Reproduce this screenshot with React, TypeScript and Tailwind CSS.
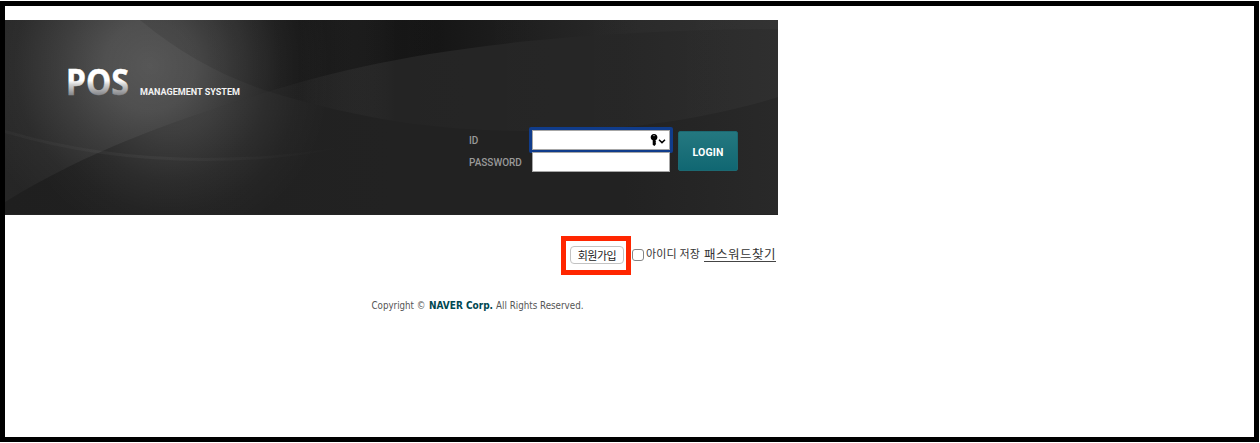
import React from "react";

function BannerArt() {
  return (
    <svg className="absolute inset-0 h-full w-full" viewBox="5 20 773 195" preserveAspectRatio="none" aria-hidden="true">
      <defs>
        <linearGradient id="base" x1="0" y1="0" x2="1" y2="0">
          <stop offset="0" stopColor="#262626" />
          <stop offset="0.3" stopColor="#1f1f1f" />
          <stop offset="0.42" stopColor="#171717" />
          <stop offset="0.56" stopColor="#131313" />
          <stop offset="0.68" stopColor="#1c1c1c" />
          <stop offset="0.82" stopColor="#262626" />
          <stop offset="1" stopColor="#2d2d2d" />
        </linearGradient>
        <linearGradient id="lower" x1="0" y1="0" x2="1" y2="0">
          <stop offset="0" stopColor="#1f1f1f" />
          <stop offset="0.5" stopColor="#222222" />
          <stop offset="0.8" stopColor="#222222" />
          <stop offset="1" stopColor="#292929" />
        </linearGradient>
        <radialGradient id="glow" gradientUnits="userSpaceOnUse" cx="150" cy="66" r="180">
          <stop offset="0" stopColor="#fff" stopOpacity="0.24" />
          <stop offset="0.25" stopColor="#fff" stopOpacity="0.205" />
          <stop offset="0.5" stopColor="#fff" stopOpacity="0.115" />
          <stop offset="0.75" stopColor="#fff" stopOpacity="0.035" />
          <stop offset="1" stopColor="#fff" stopOpacity="0" />
        </radialGradient>
        <radialGradient id="glowLow" gradientUnits="userSpaceOnUse" cx="170" cy="85" r="160">
          <stop offset="0" stopColor="#fff" stopOpacity="0.19" />
          <stop offset="0.3" stopColor="#fff" stopOpacity="0.135" />
          <stop offset="0.6" stopColor="#fff" stopOpacity="0.055" />
          <stop offset="0.8" stopColor="#fff" stopOpacity="0.018" />
          <stop offset="1" stopColor="#fff" stopOpacity="0" />
        </radialGradient>
        <linearGradient id="lens" x1="0" y1="0" x2="1" y2="0">
          <stop offset="0" stopColor="#000" stopOpacity="0.1" />
          <stop offset="0.25" stopColor="#000" stopOpacity="0.1" />
          <stop offset="0.4" stopColor="#fff" stopOpacity="0.01" />
          <stop offset="1" stopColor="#fff" stopOpacity="0.03" />
        </linearGradient>
        <linearGradient id="shine" gradientUnits="userSpaceOnUse" x1="5" y1="0" x2="350" y2="0">
          <stop offset="0" stopColor="#fff" stopOpacity="0.025" />
          <stop offset="0.45" stopColor="#fff" stopOpacity="0.04" />
          <stop offset="1" stopColor="#fff" stopOpacity="0" />
        </linearGradient>
      </defs>
      <rect x="5" y="20" width="773" height="195" fill="url(#base)" />
      <rect x="5" y="20" width="773" height="195" fill="url(#glow)" />
      <path d="M5 202C90 149 180 119 267 92C350 66 490 31 778 29V215H5Z" fill="url(#lower)" />
      <path d="M5 202C90 149 180 119 267 92C350 66 490 31 778 29V215H5Z" fill="url(#glowLow)" />
      <path d="M140 20C178 52 222 76 267 91C350 116 430 132 540 131C630 131 715 117 778 97V20Z" fill="url(#lens)" />
      <path d="M5 130Q100 158 205 158Q300 158 370 140Q300 161 205 161Q100 161 5 133Z" fill="url(#shine)" />
      <rect x="5" y="214" width="773" height="1" fill="#252525" />
    </svg>
  );
}

function Brand() {
  return (
    <h1 className="flex items-start pl-[62px] pt-[36px] text-white">
      <span className="-mr-[27px] block h-[42px] w-[100px] shrink-0">
        <svg className="h-[48px] w-[100px] overflow-visible" viewBox="0 -6 100 48" role="img" aria-label="POS">
          <defs>
            <linearGradient id="metal" gradientUnits="userSpaceOnUse" x1="0" y1="7" x2="0" y2="33">
              <stop offset="0.45" stopColor="#ffffff" />
              <stop offset="0.6" stopColor="#d2d2d2" />
              <stop offset="1" stopColor="#85868a" />
            </linearGradient>
          </defs>
          <text x="-1" y="33" fontSize="36" fontWeight="700" fontFamily="'Noto Sans', sans-serif" textLength="63" lengthAdjust="spacingAndGlyphs" fill="url(#metal)" stroke="url(#metal)" strokeWidth="0.4">
            POS
          </text>
        </svg>
      </span>
      <svg className="mt-[26px] h-4 w-[110px] overflow-visible" viewBox="0 -4 110 16" role="img" aria-label="Management system">
        <text x="0" y="9" fontSize="9.8" fontWeight="700" fontFamily="Roboto, sans-serif" textLength="100" lengthAdjust="spacingAndGlyphs" fill="#f2f2f2">
          MANAGEMENT SYSTEM
        </text>
      </svg>
    </h1>
  );
}

function LoginForm() {
  return (
    <form className="mt-[32px] flex pl-[464px]" onSubmit={(e) => e.preventDefault()}>
      <div className="flex w-[63px] flex-col font-['Roboto',sans-serif] text-[10px] font-medium leading-[22px] text-[#999]">
        <label htmlFor="user">ID</label>
        <label htmlFor="pass">PASSWORD</label>
      </div>
      <div className="flex flex-col gap-[2px]">
        <div className="-mx-[3px] -my-[3px] rounded-[2px] bg-[#103c8b] p-[3px]">
          <div className="flex h-5 w-[138px] items-center justify-end border border-[#a6a6a6] bg-white pr-[3px]">
            <input id="user" className="h-full w-0 min-w-0 grow outline-none" />
            <svg className="h-3 w-4" viewBox="0 0 16 12" aria-hidden="true">
              <path fillRule="evenodd" d="M4 0C6.2 0 7.4 1.4 7.4 3.3C7.4 4.9 6.6 5.9 5.6 6.3V7.2L6.2 7.8L5.5 8.5L6.2 9.2L5.5 10L5.9 10.6L4.3 12L2.7 10.8V6.3C1.5 5.9.7 4.9.7 3.3C.7 1.4 1.9 0 4 0ZM4 1A.6.6 0 1 0 4 2.2A.6.6 0 1 0 4 1Z" fill="#000" />
              <path d="M9 5.8L12 8.6L15 5.8" fill="none" stroke="#000" strokeWidth="1.5" />
            </svg>
          </div>
        </div>
        <input id="pass" type="password" className="relative h-5 w-[138px] border border-[#a6a6a6] bg-white outline-none" />
      </div>
      <button className="ml-2 mt-px h-10 w-[60px] rounded-[2px] border border-[#1c6972] bg-gradient-to-b from-[#247880] to-[#106772] pt-[3px] font-['Roboto',sans-serif] text-[10.5px] font-bold tracking-[0.15px] text-white">
        LOGIN
      </button>
    </form>
  );
}

export default function App() {
  return (
    <div className="h-[443px] w-[1260px] overflow-hidden bg-white pt-px">
      <main className="h-[441px] w-[1259px] border-[5px] border-black bg-white pt-[14px] font-['Liberation_Sans','Noto_Sans_CJK_KR',sans-serif]">
        <section className="relative h-[195px] w-[773px] overflow-hidden">
          <BannerArt />
          <div className="relative -mb-1">
            <div className="h-[78px]">
              <Brand />
            </div>
            <LoginForm />
          </div>
        </section>
        <div className="mt-[21px] flex h-[39px] w-[773px] items-start pl-[556px] font-['Noto_Sans_CJK_KR',sans-serif] text-[#333]">
          <div className="flex h-[39px] w-[70px] shrink-0 items-start border-[5px] border-[#ff2600] pl-1 pt-[5px]">
            <button className="h-[18px] w-[54px] rounded-[4px] border border-[#c3c3c3] bg-white text-[11px] leading-[14px] tracking-[-0.5px] text-[#222]">회원가입</button>
          </div>
          <label className="ml-px flex h-9 shrink-0 items-center">
            <input type="checkbox" className="mt-[2px] h-3 w-3 appearance-none rounded-[3px] border border-[#858585] bg-white" />
            <span className="-mt-[2px] ml-[2px] w-[58px] whitespace-nowrap text-[11px] leading-4 tracking-[0.15px]">아이디 저장</span>
          </label>
          <a href="#" className="mt-[10px] h-4 w-[72px] shrink-0 whitespace-nowrap border-b border-[#444] text-[12.5px] leading-4 tracking-[0.5px]">패스워드찾기</a>
        </div>
        <footer className="mt-[21px] flex pl-[366px]">
          <svg className="h-5 w-[230px] overflow-visible" viewBox="0 -2 230 20" role="contentinfo">
            <g fontFamily="'DejaVu Sans Condensed', 'DejaVu Sans', sans-serif" fontSize="10.3">
              <text x="0.5" y="11" textLength="54" lengthAdjust="spacingAndGlyphs" fill="#555">Copyright ©</text>
              <text x="58" y="11" textLength="64" lengthAdjust="spacingAndGlyphs" fontWeight="700" fill="#004851">NAVER Corp.</text>
              <text x="125" y="11" textLength="87.5" lengthAdjust="spacingAndGlyphs" fill="#555">All Rights Reserved.</text>
            </g>
          </svg>
        </footer>
      </main>
    </div>
  );
}
